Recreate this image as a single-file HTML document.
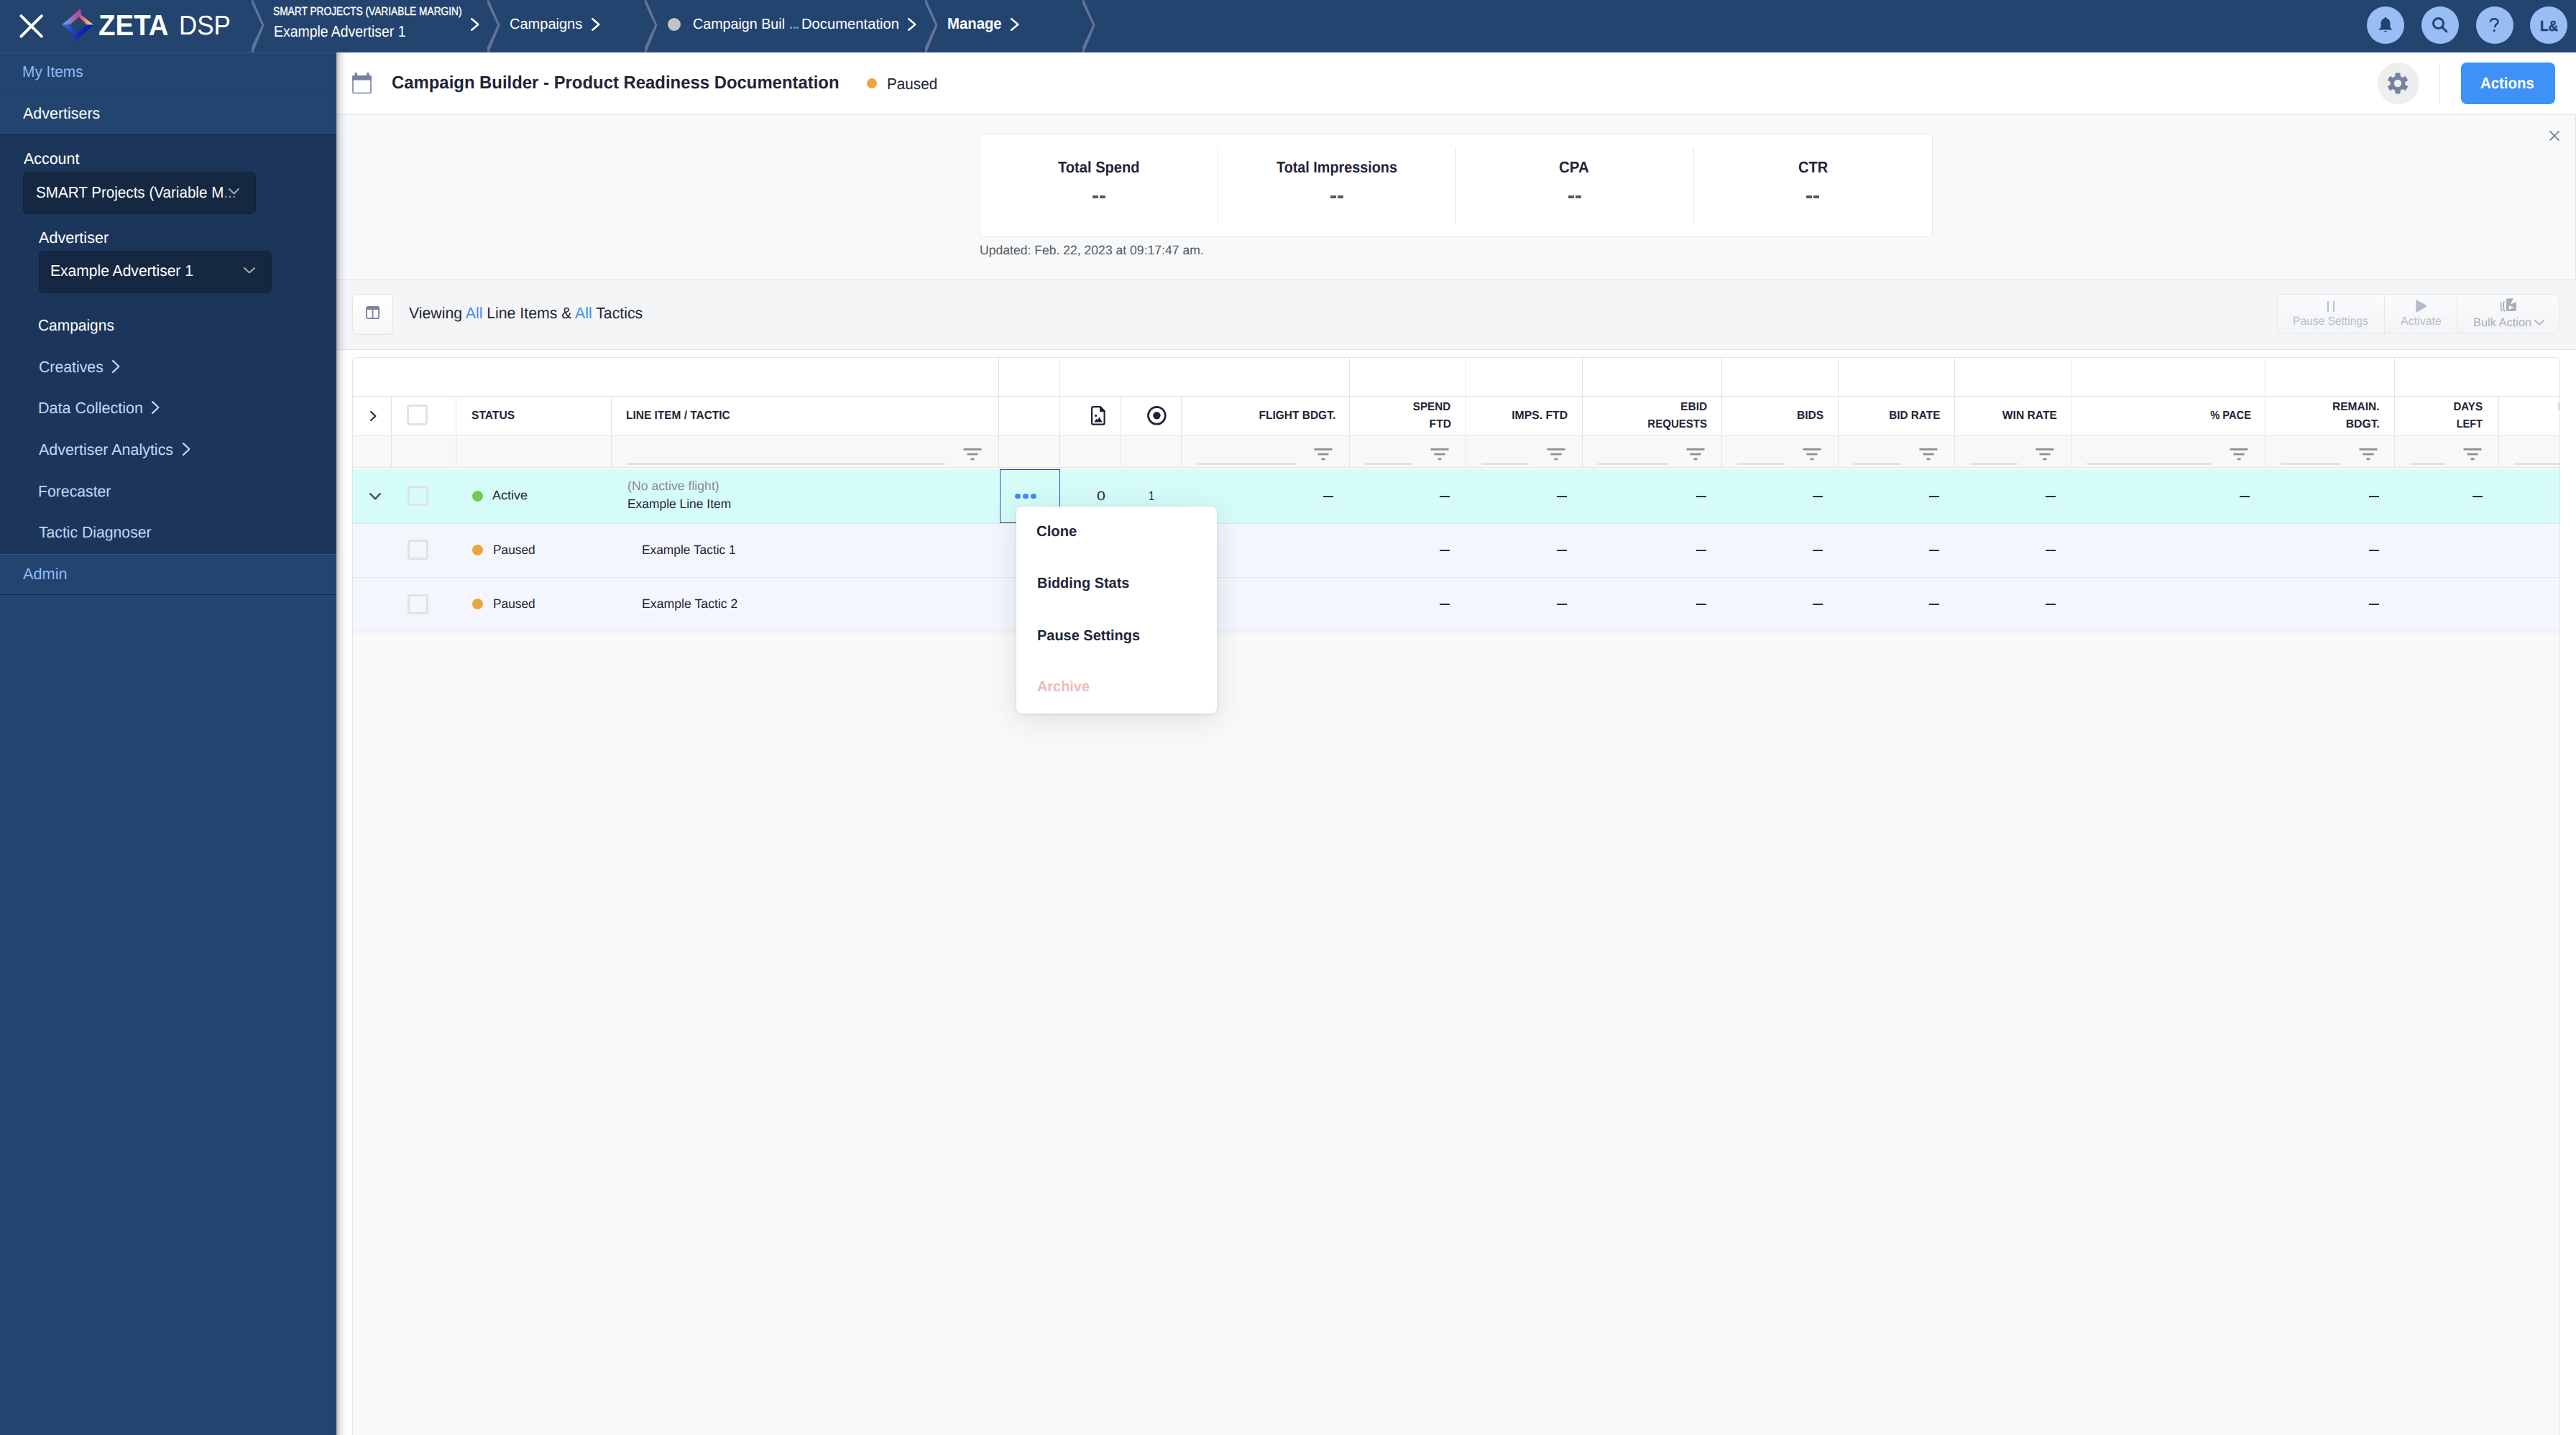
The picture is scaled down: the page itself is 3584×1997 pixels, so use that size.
<!DOCTYPE html>
<html><head><meta charset="utf-8"><title>Zeta DSP</title>
<style>
html,body{margin:0;padding:0;width:3584px;height:1997px;overflow:hidden;background:#fff;font-family:"Liberation Sans", sans-serif;}
body{position:relative;}
.b{position:absolute;}
.t{position:absolute;white-space:nowrap;line-height:1;text-rendering:geometricPrecision;}
</style></head><body>
<div class="b" style="left:0px;top:0px;width:3584px;height:73px;background:#23446F;"></div>
<div class="b" style="left:0px;top:73px;width:468px;height:1px;background:#245B7A;"></div>
<svg class="b" style="left:26px;top:19px" width="35" height="35" viewBox="0 0 35 35"><path d="M3.4 3.1L31.9 31.7M31.9 3.1L3.4 31.7" stroke="#fff" stroke-width="3.9" stroke-linecap="round"/></svg>
<svg class="b" style="left:80px;top:5px" width="56" height="60" viewBox="80 5 56 60">
<defs><linearGradient id="lg1" gradientUnits="userSpaceOnUse" x1="86" y1="34" x2="130" y2="34"><stop offset="0" stop-color="#45B4F2"/><stop offset="0.55" stop-color="#C7428A"/><stop offset="0.75" stop-color="#E98A78"/><stop offset="1" stop-color="#FCF77A"/></linearGradient>
<linearGradient id="lg2" gradientUnits="userSpaceOnUse" x1="86" y1="34" x2="130" y2="50"><stop offset="0" stop-color="#3A6BDC"/><stop offset="0.6" stop-color="#1028B8"/><stop offset="1" stop-color="#0812A0"/></linearGradient></defs>
<path d="M86 34.6 L111.6 12.6 L113.3 21 L130 34.6 L121 34.6 L110 23.6 L97 34.6 Z" fill="url(#lg1)"/>
<path d="M86 34.6 L97 34.6 L106 46.5 L121 34.6 L130 34.6 L104.3 58 L102.5 48 Z" fill="url(#lg2)"/>
</svg>
<svg class="b" style="left:350px;top:0px" width="20" height="73" viewBox="0 0 20 73"><path d="M0 0 L2.2 0 L17.6 35.1 L2.2 73 L0 73 L0 65.6 L14.3 35.1 L0 4.6 Z" fill="#627395"/></svg>
<svg class="b" style="left:678px;top:0px" width="20" height="73" viewBox="0 0 20 73"><path d="M0 0 L2.2 0 L17.6 35.1 L2.2 73 L0 73 L0 65.6 L14.3 35.1 L0 4.6 Z" fill="#627395"/></svg>
<svg class="b" style="left:897px;top:0px" width="20" height="73" viewBox="0 0 20 73"><path d="M0 0 L2.2 0 L17.6 35.1 L2.2 73 L0 73 L0 65.6 L14.3 35.1 L0 4.6 Z" fill="#627395"/></svg>
<svg class="b" style="left:1287px;top:0px" width="20" height="73" viewBox="0 0 20 73"><path d="M0 0 L2.2 0 L17.6 35.1 L2.2 73 L0 73 L0 65.6 L14.3 35.1 L0 4.6 Z" fill="#627395"/></svg>
<svg class="b" style="left:1506px;top:0px" width="20" height="73" viewBox="0 0 20 73"><path d="M0 0 L2.2 0 L17.6 35.1 L2.2 73 L0 73 L0 65.6 L14.3 35.1 L0 4.6 Z" fill="#627395"/></svg>
<svg class="b" style="left:655px;top:25px" width="12" height="18" viewBox="0 0 12 18"><path d="M1.25 1.25 L10.25 9.0 L1.25 16.75" stroke="#fff" stroke-width="2.5" fill="none" stroke-linecap="round" stroke-linejoin="round"/></svg>
<svg class="b" style="left:823px;top:25px" width="12" height="18" viewBox="0 0 12 18"><path d="M1.25 1.25 L10.25 9.0 L1.25 16.75" stroke="#fff" stroke-width="2.5" fill="none" stroke-linecap="round" stroke-linejoin="round"/></svg>
<div class="b" style="left:929px;top:25px;width:18px;height:18px;background:#C0C3C8;border-radius:50%;"></div>
<div class="b" style="left:1099px;top:37px;width:3px;height:3px;background:#6FA8F5;border-radius:50%;"></div>
<div class="b" style="left:1103.6px;top:37px;width:3px;height:3px;background:#6FA8F5;border-radius:50%;"></div>
<div class="b" style="left:1108.2px;top:37px;width:3px;height:3px;background:#6FA8F5;border-radius:50%;"></div>
<svg class="b" style="left:1263px;top:25px" width="12" height="18" viewBox="0 0 12 18"><path d="M1.25 1.25 L10.25 9.0 L1.25 16.75" stroke="#fff" stroke-width="2.5" fill="none" stroke-linecap="round" stroke-linejoin="round"/></svg>
<svg class="b" style="left:1406px;top:25px" width="12" height="18" viewBox="0 0 12 18"><path d="M1.25 1.25 L10.25 9.0 L1.25 16.75" stroke="#fff" stroke-width="2.5" fill="none" stroke-linecap="round" stroke-linejoin="round"/></svg>
<div class="b" style="left:3293px;top:9px;width:52px;height:52px;background:#99BEF6;border-radius:50%;"></div>
<div class="b" style="left:3369px;top:9px;width:52px;height:52px;background:#99BEF6;border-radius:50%;"></div>
<div class="b" style="left:3445px;top:9px;width:52px;height:52px;background:#99BEF6;border-radius:50%;"></div>
<div class="b" style="left:3520px;top:9px;width:52px;height:52px;background:#99BEF6;border-radius:50%;"></div>
<svg class="b" style="left:3306px;top:22px" width="26" height="26" viewBox="0 0 26 26"><path d="M13 2 C14 2 14.5 2.6 14.5 3.4 C18 4.3 19.5 7.5 19.5 11 L19.5 15 C19.5 16.5 20.5 17.8 22.5 18.8 L22.5 19.6 L3.5 19.6 L3.5 18.8 C5.5 17.8 6.5 16.5 6.5 15 L6.5 11 C6.5 7.5 8 4.3 11.5 3.4 C11.5 2.6 12 2 13 2 Z M10.8 21 L15.2 21 L13 23.2 Z" fill="#22426E"/></svg>
<svg class="b" style="left:3382px;top:22px" width="26" height="26" viewBox="0 0 26 26"><circle cx="10.5" cy="10.5" r="7" stroke="#22426E" stroke-width="3" fill="none"/><path d="M15.5 15.5 L22 22" stroke="#22426E" stroke-width="3" stroke-linecap="round"/></svg>
<svg class="b" style="left:3463px;top:25px" width="16" height="21" viewBox="0 0 16 21"><path d="M1.9 5.6 C2.1 2.7 4.5 1.3 7.3 1.3 C10.4 1.3 12.5 3.1 12.5 5.4 C12.5 7.6 10.8 8.5 9.6 9.5 C8.7 10.2 8.3 11.1 8.3 13.3" stroke="#22426E" stroke-width="2.6" fill="none"/><path d="M7.1 15.8 L9.1 17.7 L7.1 19.6 L5.1 17.7 Z" fill="#22426E"/></svg>
<div class="b" style="left:0px;top:74px;width:468px;height:1923px;background:#22456F;"></div>
<div class="b" style="left:0px;top:74px;width:468px;height:55px;background:#23446F;"></div>
<div class="b" style="left:0px;top:129px;width:468px;height:1px;background:#1B2B42;"></div>
<div class="b" style="left:0px;top:130px;width:468px;height:1px;background:#245B7A;"></div>
<div class="b" style="left:0px;top:131px;width:468px;height:56px;background:#23446F;"></div>
<div class="b" style="left:0px;top:187px;width:468px;height:584px;background:#1C365B;"></div>
<div class="b" style="left:0px;top:187px;width:468px;height:1px;background:#15263D;"></div>
<div class="b" style="left:0px;top:771px;width:468px;height:1px;background:#245B7A;"></div>
<div class="b" style="left:0px;top:772px;width:468px;height:55px;background:#23446F;"></div>
<div class="b" style="left:0px;top:827px;width:468px;height:1px;background:#1B2B42;"></div>
<div class="b" style="left:32px;top:239px;width:324px;height:59px;background:#152842;border-radius:7px;box-sizing:border-box;border:1px solid #10213A;"></div>
<svg class="b" style="left:317.5px;top:262px" width="15" height="9" viewBox="0 0 15 9"><path d="M1.0 1.0 L7.5 7.5 L14.0 1.0" stroke="#A9A7A8" stroke-width="2" fill="none" stroke-linecap="round" stroke-linejoin="round"/></svg>
<div class="b" style="left:54px;top:349px;width:324px;height:59px;background:#152842;border-radius:7px;box-sizing:border-box;border:1px solid #10213A;"></div>
<svg class="b" style="left:339px;top:372px" width="16" height="9" viewBox="0 0 16 9"><path d="M1.0 1.0 L8.0 7.5 L15.0 1.0" stroke="#A9A7A8" stroke-width="2" fill="none" stroke-linecap="round" stroke-linejoin="round"/></svg>
<svg class="b" style="left:156px;top:501px" width="11" height="18" viewBox="0 0 11 18"><path d="M1.1 1.1 L9.4 9.0 L1.1 16.9" stroke="#C2D7F9" stroke-width="2.2" fill="none" stroke-linecap="round" stroke-linejoin="round"/></svg>
<svg class="b" style="left:211px;top:558px" width="11" height="18" viewBox="0 0 11 18"><path d="M1.1 1.1 L9.4 9.0 L1.1 16.9" stroke="#C2D7F9" stroke-width="2.2" fill="none" stroke-linecap="round" stroke-linejoin="round"/></svg>
<svg class="b" style="left:254px;top:616px" width="11" height="18" viewBox="0 0 11 18"><path d="M1.1 1.1 L9.4 9.0 L1.1 16.9" stroke="#C2D7F9" stroke-width="2.2" fill="none" stroke-linecap="round" stroke-linejoin="round"/></svg>
<div class="b" style="left:468px;top:73px;width:3116px;height:86px;background:#fff;"></div>
<div class="b" style="left:468px;top:159px;width:3116px;height:1px;background:#E4E7EB;"></div>
<div class="b" style="left:468px;top:160px;width:3116px;height:228px;background:#F8F9FA;"></div>
<div class="b" style="left:468px;top:388px;width:3116px;height:1px;background:#E2E5EA;"></div>
<div class="b" style="left:3583px;top:160px;width:1px;height:228px;background:#E2E5EA;"></div>
<div class="b" style="left:468px;top:389px;width:3116px;height:97px;background:#F4F5F7;"></div>
<div class="b" style="left:468px;top:486px;width:3116px;height:1px;background:#E2E5EA;"></div>
<div class="b" style="left:468px;top:487px;width:3116px;height:1510px;background:#fff;"></div>
<svg class="b" style="left:490px;top:101px" width="28" height="30" viewBox="0 0 28 30">
<rect x="1.0" y="4.9" width="25.0" height="23.6" rx="1.6" fill="none" stroke="#7482A0" stroke-width="1.6"/>
<rect x="0.2" y="4.1" width="26.6" height="6.5" fill="#7482A0"/>
<rect x="3.6" y="0.2" width="3.3" height="4.5" fill="#7482A0"/><rect x="20.1" y="0.2" width="3.4" height="4.5" fill="#7482A0"/>
</svg>
<div class="b" style="left:1206px;top:109px;width:14px;height:14px;background:#EBA53E;border-radius:50%;"></div>
<div class="b" style="left:3308px;top:87px;width:58px;height:58px;background:#EEEEEE;border-radius:50%;"></div>
<svg class="b" style="left:3320px;top:100px" width="32" height="32" viewBox="0 0 32 32">
<g fill="#7683A0" transform="translate(16 16)">
<rect x="-3.6" y="-14.5" width="7.2" height="29" rx="1"/>
<rect x="-3.6" y="-14.5" width="7.2" height="29" rx="1" transform="rotate(60)"/>
<rect x="-3.6" y="-14.5" width="7.2" height="29" rx="1" transform="rotate(120)"/>
<circle r="10.5"/>
</g><circle cx="16" cy="16" r="5.2" fill="#EEEEEE"/></svg>
<div class="b" style="left:3394px;top:87px;width:1px;height:58px;background:#E3E3E3;"></div>
<div class="b" style="left:3424px;top:87px;width:131px;height:58px;background:#3D91F7;border-radius:8px;"></div>
<div class="b" style="left:1363px;top:186px;width:1326px;height:144px;background:#fff;border:1px solid #E6E8EB;box-sizing:border-box;border-radius:3px;"></div>
<div class="b" style="left:1694px;top:205px;width:1px;height:107px;background:#E6E6E6;"></div>
<div class="b" style="left:2025px;top:205px;width:1px;height:107px;background:#E6E6E6;"></div>
<div class="b" style="left:2356px;top:205px;width:1px;height:107px;background:#E6E6E6;"></div>
<div class="b" style="left:1520px;top:272px;width:8px;height:4px;background:#4F5A62;border-radius:1px;"></div>
<div class="b" style="left:1530px;top:272px;width:8px;height:4px;background:#4F5A62;border-radius:1px;"></div>
<div class="b" style="left:1851px;top:272px;width:8px;height:4px;background:#4F5A62;border-radius:1px;"></div>
<div class="b" style="left:1861px;top:272px;width:8px;height:4px;background:#4F5A62;border-radius:1px;"></div>
<div class="b" style="left:2182px;top:272px;width:8px;height:4px;background:#4F5A62;border-radius:1px;"></div>
<div class="b" style="left:2192px;top:272px;width:8px;height:4px;background:#4F5A62;border-radius:1px;"></div>
<div class="b" style="left:2513px;top:272px;width:8px;height:4px;background:#4F5A62;border-radius:1px;"></div>
<div class="b" style="left:2523px;top:272px;width:8px;height:4px;background:#4F5A62;border-radius:1px;"></div>
<svg class="b" style="left:3546px;top:181px" width="16" height="16" viewBox="0 0 16 16"><path d="M1.5 1.5L14.5 14.5M14.5 1.5L1.5 14.5" stroke="#7683A0" stroke-width="1.8"/></svg>
<div class="b" style="left:490px;top:409px;width:57px;height:57px;background:linear-gradient(#fff,#F6F6F6);border:1px solid #E3E3E6;box-sizing:border-box;border-radius:7px;"></div>
<svg class="b" style="left:509px;top:426px" width="19" height="18" viewBox="0 0 19 18">
<rect x="0.9" y="0.9" width="17.2" height="16.2" rx="2.2" fill="none" stroke="#7783A0" stroke-width="1.8"/>
<rect x="0.9" y="0.9" width="17.2" height="4.2" rx="1.5" fill="#7783A0"/><rect x="8.6" y="3" width="1.8" height="14" fill="#7783A0"/></svg>
<div class="b" style="left:3168px;top:409px;width:393px;height:56px;background:linear-gradient(#FAFBFC,#F3F4F6);border:1px solid #E6E8EC;box-sizing:border-box;border-radius:8px;"></div>
<div class="b" style="left:3317px;top:410px;width:1px;height:54px;background:#E6E8EC;"></div>
<div class="b" style="left:3418px;top:410px;width:1px;height:54px;background:#E6E8EC;"></div>
<div class="b" style="left:3238px;top:419px;width:2px;height:15px;background:#B7BECE;"></div>
<div class="b" style="left:3246px;top:419px;width:2px;height:15px;background:#B7BECE;"></div>
<svg class="b" style="left:3361px;top:417px" width="16" height="18" viewBox="0 0 16 18"><path d="M0.3 2 Q0.3 -0.2 2.4 0.9 L14.2 7.6 Q15.6 8.9 14.2 10.2 L2.4 16.9 Q0.3 18.1 0.3 15.8 Z" fill="#B4BBCB"/></svg>
<svg class="b" style="left:3478px;top:414px" width="24" height="20" viewBox="0 0 24 20">
<path d="M2.4 6.5 Q1.6 8 1.6 12 Q1.6 17.5 3.4 19.2" stroke="#A9AEB8" stroke-width="1.6" fill="none"/>
<path d="M6 5 Q5.1 7 5.1 12 Q5.1 17.6 7 19.2" stroke="#A9AEB8" stroke-width="1.8" fill="none"/>
<path d="M10.6 1.3 L18.9 1.3 L14.9 9.4 L23 6 L23 17.8 Q23 19 21.8 19 L10.2 19 Q9 19 9 17.8 L9 2.9 Q9 1.3 10.6 1.3 Z" fill="#A9AEB8"/>
<path d="M12.7 11.8 Q12.7 11 13.4 11.3 L19.6 14 L13.4 16.6 Q12.7 16.9 12.7 16.1 Z" fill="#F5F6F8"/></svg>
<svg class="b" style="left:3526px;top:445px" width="14" height="8" viewBox="0 0 14 8"><path d="M0.9 0.9 L7.0 6.6 L13.1 0.9" stroke="#A9AEB8" stroke-width="1.8" fill="none" stroke-linecap="round" stroke-linejoin="round"/></svg>
<div class="b" style="left:490px;top:497px;width:3072px;height:1510px;background:#F9F9F9;border:1px solid #E4E4E4;box-sizing:border-box;border-radius:5px;"></div>
<div class="b" style="left:491px;top:498px;width:3070px;height:53px;background:#fff;border-radius:4px 4px 0 0;"></div>
<div class="b" style="left:491px;top:551px;width:3070px;height:1px;background:#E4E4E4;"></div>
<div class="b" style="left:491px;top:552px;width:3070px;height:53px;background:#fff;"></div>
<div class="b" style="left:491px;top:605px;width:3070px;height:1px;background:#E4E4E4;"></div>
<div class="b" style="left:491px;top:606px;width:3070px;height:44px;background:#F8F8F8;"></div>
<div class="b" style="left:491px;top:650px;width:3070px;height:1px;background:#E4E4E4;"></div>
<div class="b" style="left:491px;top:651px;width:3070px;height:2px;background:#FAFAFA;"></div>
<div class="b" style="left:491px;top:653px;width:3070px;height:75px;background:#D6FCFA;"></div>
<div class="b" style="left:491px;top:728px;width:3070px;height:1px;background:#E3E6EA;"></div>
<div class="b" style="left:491px;top:729px;width:3070px;height:74px;background:#F3F6FD;"></div>
<div class="b" style="left:491px;top:803px;width:3070px;height:1px;background:#E3E6EA;"></div>
<div class="b" style="left:491px;top:804px;width:3070px;height:75px;background:#F3F6FD;"></div>
<div class="b" style="left:491px;top:879px;width:3070px;height:1px;background:#E3E3E3;"></div>
<div class="b" style="left:1389px;top:498px;width:1px;height:53px;background:#E4E4E4;"></div>
<div class="b" style="left:1474px;top:498px;width:1px;height:53px;background:#E4E4E4;"></div>
<div class="b" style="left:1877px;top:498px;width:1px;height:53px;background:#E4E4E4;"></div>
<div class="b" style="left:2039px;top:498px;width:1px;height:53px;background:#E4E4E4;"></div>
<div class="b" style="left:2201px;top:498px;width:1px;height:53px;background:#E4E4E4;"></div>
<div class="b" style="left:2395px;top:498px;width:1px;height:53px;background:#E4E4E4;"></div>
<div class="b" style="left:2557px;top:498px;width:1px;height:53px;background:#E4E4E4;"></div>
<div class="b" style="left:2719px;top:498px;width:1px;height:53px;background:#E4E4E4;"></div>
<div class="b" style="left:2881px;top:498px;width:1px;height:53px;background:#E4E4E4;"></div>
<div class="b" style="left:3151px;top:498px;width:1px;height:53px;background:#E4E4E4;"></div>
<div class="b" style="left:3331px;top:498px;width:1px;height:53px;background:#E4E4E4;"></div>
<div class="b" style="left:544px;top:552px;width:1px;height:98px;background:#E4E4E4;"></div>
<div class="b" style="left:634px;top:552px;width:1px;height:98px;background:#E4E4E4;"></div>
<div class="b" style="left:850px;top:552px;width:1px;height:98px;background:#E4E4E4;"></div>
<div class="b" style="left:1389px;top:552px;width:1px;height:98px;background:#E4E4E4;"></div>
<div class="b" style="left:1474px;top:552px;width:1px;height:98px;background:#E4E4E4;"></div>
<div class="b" style="left:1559px;top:552px;width:1px;height:98px;background:#E4E4E4;"></div>
<div class="b" style="left:1643px;top:552px;width:1px;height:98px;background:#E4E4E4;"></div>
<div class="b" style="left:1877px;top:552px;width:1px;height:98px;background:#E4E4E4;"></div>
<div class="b" style="left:2039px;top:552px;width:1px;height:98px;background:#E4E4E4;"></div>
<div class="b" style="left:2201px;top:552px;width:1px;height:98px;background:#E4E4E4;"></div>
<div class="b" style="left:2395px;top:552px;width:1px;height:98px;background:#E4E4E4;"></div>
<div class="b" style="left:2557px;top:552px;width:1px;height:98px;background:#E4E4E4;"></div>
<div class="b" style="left:2719px;top:552px;width:1px;height:98px;background:#E4E4E4;"></div>
<div class="b" style="left:2881px;top:552px;width:1px;height:98px;background:#E4E4E4;"></div>
<div class="b" style="left:3151px;top:552px;width:1px;height:98px;background:#E4E4E4;"></div>
<div class="b" style="left:3331px;top:552px;width:1px;height:98px;background:#E4E4E4;"></div>
<div class="b" style="left:3476px;top:552px;width:1px;height:98px;background:#E4E4E4;"></div>
<svg class="b" style="left:515px;top:572px" width="9" height="14" viewBox="0 0 9 14"><path d="M1.0 1.0 L7.5 7.0 L1.0 13.0" stroke="#1F2538" stroke-width="2" fill="none" stroke-linecap="round" stroke-linejoin="round"/></svg>
<div class="b" style="left:566px;top:563px;width:29px;height:29px;border:3px solid #E2E2E2;box-sizing:border-box;border-radius:4px;background:#fff;"></div>
<svg class="b" style="left:1518px;top:565px" width="21" height="27" viewBox="0 0 21 27">
<path d="M3 1.1 L12.8 1.1 L18.6 7.2 L18.6 23.8 Q18.6 25.7 16.7 25.7 L3 25.7 Q1.1 25.7 1.1 23.8 L1.1 3 Q1.1 1.1 3 1.1 Z" fill="none" stroke="#1F2538" stroke-width="2.2" stroke-linejoin="round"/>
<path d="M12 0.2 L13.2 0.2 L19.6 6.8 L19.6 8.2 L13.6 8.2 Q12 8.2 12 6.6 Z" fill="#1F2538"/>
<circle cx="6.6" cy="13.4" r="1.6" fill="#1F2538"/>
<path d="M4.2 22.6 L7.6 17.6 L9.2 19.4 L11.4 15.2 L15.8 22.6 Z" fill="#1F2538"/></svg>
<svg class="b" style="left:1596px;top:565px" width="28" height="28" viewBox="0 0 28 28"><circle cx="13.4" cy="13.3" r="11.9" fill="none" stroke="#1F2538" stroke-width="2.7"/><circle cx="13.4" cy="13.3" r="5.2" fill="#1F2538"/></svg>
<div class="b" style="left:872px;top:644px;width:443px;height:3px;background:#E2E2E2;border-radius:1.5px;"></div>
<svg class="b" style="left:1340px;top:624px" width="26" height="17" viewBox="0 0 26 17"><rect x="0.5" y="0" width="25" height="2.6" fill="#8A8C92"/><rect x="5.5" y="6.8" width="15" height="2.6" fill="#8A8C92"/><rect x="10.5" y="13.6" width="5" height="2.6" fill="#8A8C92"/></svg>
<div class="b" style="left:1666px;top:644px;width:137px;height:3px;background:#E2E2E2;border-radius:1.5px;"></div>
<svg class="b" style="left:1828px;top:624px" width="26" height="17" viewBox="0 0 26 17"><rect x="0.5" y="0" width="25" height="2.6" fill="#8A8C92"/><rect x="5.5" y="6.8" width="15" height="2.6" fill="#8A8C92"/><rect x="10.5" y="13.6" width="5" height="2.6" fill="#8A8C92"/></svg>
<div class="b" style="left:1899px;top:644px;width:66px;height:3px;background:#E2E2E2;border-radius:1.5px;"></div>
<svg class="b" style="left:1990px;top:624px" width="26" height="17" viewBox="0 0 26 17"><rect x="0.5" y="0" width="25" height="2.6" fill="#8A8C92"/><rect x="5.5" y="6.8" width="15" height="2.6" fill="#8A8C92"/><rect x="10.5" y="13.6" width="5" height="2.6" fill="#8A8C92"/></svg>
<div class="b" style="left:2061px;top:644px;width:66px;height:3px;background:#E2E2E2;border-radius:1.5px;"></div>
<svg class="b" style="left:2152px;top:624px" width="26" height="17" viewBox="0 0 26 17"><rect x="0.5" y="0" width="25" height="2.6" fill="#8A8C92"/><rect x="5.5" y="6.8" width="15" height="2.6" fill="#8A8C92"/><rect x="10.5" y="13.6" width="5" height="2.6" fill="#8A8C92"/></svg>
<div class="b" style="left:2223px;top:644px;width:98px;height:3px;background:#E2E2E2;border-radius:1.5px;"></div>
<svg class="b" style="left:2346px;top:624px" width="26" height="17" viewBox="0 0 26 17"><rect x="0.5" y="0" width="25" height="2.6" fill="#8A8C92"/><rect x="5.5" y="6.8" width="15" height="2.6" fill="#8A8C92"/><rect x="10.5" y="13.6" width="5" height="2.6" fill="#8A8C92"/></svg>
<div class="b" style="left:2417px;top:644px;width:66px;height:3px;background:#E2E2E2;border-radius:1.5px;"></div>
<svg class="b" style="left:2508px;top:624px" width="26" height="17" viewBox="0 0 26 17"><rect x="0.5" y="0" width="25" height="2.6" fill="#8A8C92"/><rect x="5.5" y="6.8" width="15" height="2.6" fill="#8A8C92"/><rect x="10.5" y="13.6" width="5" height="2.6" fill="#8A8C92"/></svg>
<div class="b" style="left:2579px;top:644px;width:66px;height:3px;background:#E2E2E2;border-radius:1.5px;"></div>
<svg class="b" style="left:2670px;top:624px" width="26" height="17" viewBox="0 0 26 17"><rect x="0.5" y="0" width="25" height="2.6" fill="#8A8C92"/><rect x="5.5" y="6.8" width="15" height="2.6" fill="#8A8C92"/><rect x="10.5" y="13.6" width="5" height="2.6" fill="#8A8C92"/></svg>
<div class="b" style="left:2741px;top:644px;width:66px;height:3px;background:#E2E2E2;border-radius:1.5px;"></div>
<svg class="b" style="left:2832px;top:624px" width="26" height="17" viewBox="0 0 26 17"><rect x="0.5" y="0" width="25" height="2.6" fill="#8A8C92"/><rect x="5.5" y="6.8" width="15" height="2.6" fill="#8A8C92"/><rect x="10.5" y="13.6" width="5" height="2.6" fill="#8A8C92"/></svg>
<div class="b" style="left:2903px;top:644px;width:174px;height:3px;background:#E2E2E2;border-radius:1.5px;"></div>
<svg class="b" style="left:3102px;top:624px" width="26" height="17" viewBox="0 0 26 17"><rect x="0.5" y="0" width="25" height="2.6" fill="#8A8C92"/><rect x="5.5" y="6.8" width="15" height="2.6" fill="#8A8C92"/><rect x="10.5" y="13.6" width="5" height="2.6" fill="#8A8C92"/></svg>
<div class="b" style="left:3173px;top:644px;width:84px;height:3px;background:#E2E2E2;border-radius:1.5px;"></div>
<svg class="b" style="left:3282px;top:624px" width="26" height="17" viewBox="0 0 26 17"><rect x="0.5" y="0" width="25" height="2.6" fill="#8A8C92"/><rect x="5.5" y="6.8" width="15" height="2.6" fill="#8A8C92"/><rect x="10.5" y="13.6" width="5" height="2.6" fill="#8A8C92"/></svg>
<div class="b" style="left:3353px;top:644px;width:49px;height:3px;background:#E2E2E2;border-radius:1.5px;"></div>
<svg class="b" style="left:3427px;top:624px" width="26" height="17" viewBox="0 0 26 17"><rect x="0.5" y="0" width="25" height="2.6" fill="#8A8C92"/><rect x="5.5" y="6.8" width="15" height="2.6" fill="#8A8C92"/><rect x="10.5" y="13.6" width="5" height="2.6" fill="#8A8C92"/></svg>
<div class="b" style="left:3498px;top:644px;width:63px;height:3px;background:#E2E2E2;"></div>
<div class="b" style="left:3559px;top:560px;width:2px;height:11px;background:#D8D8DC;"></div>
<svg class="b" style="left:514px;top:686px" width="16" height="10" viewBox="0 0 16 10"><path d="M1.2 1.2 L8.0 8.3 L14.8 1.2" stroke="#4A505C" stroke-width="2.4" fill="none" stroke-linecap="round" stroke-linejoin="round"/></svg>
<div class="b" style="left:567px;top:676px;width:29px;height:28px;border:3px solid #E2E2E2;box-sizing:border-box;border-radius:4px;"></div>
<div class="b" style="left:567px;top:751px;width:29px;height:28px;border:3px solid #E2E2E2;box-sizing:border-box;border-radius:4px;"></div>
<div class="b" style="left:567px;top:827px;width:29px;height:28px;border:3px solid #E2E2E2;box-sizing:border-box;border-radius:4px;"></div>
<div class="b" style="left:657px;top:683px;width:15px;height:15px;background:#74C952;border-radius:50%;"></div>
<div class="b" style="left:657px;top:758px;width:15px;height:15px;background:#EBA53E;border-radius:50%;"></div>
<div class="b" style="left:657px;top:833px;width:15px;height:15px;background:#EBA53E;border-radius:50%;"></div>
<div class="b" style="left:1841px;top:690px;width:14px;height:2px;background:#2A2E38;"></div>
<div class="b" style="left:2003px;top:690px;width:14px;height:2px;background:#2A2E38;"></div>
<div class="b" style="left:2166px;top:690px;width:14px;height:2px;background:#2A2E38;"></div>
<div class="b" style="left:2360px;top:690px;width:14px;height:2px;background:#2A2E38;"></div>
<div class="b" style="left:2522px;top:690px;width:14px;height:2px;background:#2A2E38;"></div>
<div class="b" style="left:2684px;top:690px;width:14px;height:2px;background:#2A2E38;"></div>
<div class="b" style="left:2846px;top:690px;width:14px;height:2px;background:#2A2E38;"></div>
<div class="b" style="left:3116px;top:690px;width:14px;height:2px;background:#2A2E38;"></div>
<div class="b" style="left:3296px;top:690px;width:14px;height:2px;background:#2A2E38;"></div>
<div class="b" style="left:3440px;top:690px;width:14px;height:2px;background:#2A2E38;"></div>
<div class="b" style="left:2003px;top:765px;width:14px;height:2px;background:#2A2E38;"></div>
<div class="b" style="left:2166px;top:765px;width:14px;height:2px;background:#2A2E38;"></div>
<div class="b" style="left:2360px;top:765px;width:14px;height:2px;background:#2A2E38;"></div>
<div class="b" style="left:2522px;top:765px;width:14px;height:2px;background:#2A2E38;"></div>
<div class="b" style="left:2684px;top:765px;width:14px;height:2px;background:#2A2E38;"></div>
<div class="b" style="left:2846px;top:765px;width:14px;height:2px;background:#2A2E38;"></div>
<div class="b" style="left:3296px;top:765px;width:14px;height:2px;background:#2A2E38;"></div>
<div class="b" style="left:2003px;top:840px;width:14px;height:2px;background:#2A2E38;"></div>
<div class="b" style="left:2166px;top:840px;width:14px;height:2px;background:#2A2E38;"></div>
<div class="b" style="left:2360px;top:840px;width:14px;height:2px;background:#2A2E38;"></div>
<div class="b" style="left:2522px;top:840px;width:14px;height:2px;background:#2A2E38;"></div>
<div class="b" style="left:2684px;top:840px;width:14px;height:2px;background:#2A2E38;"></div>
<div class="b" style="left:2846px;top:840px;width:14px;height:2px;background:#2A2E38;"></div>
<div class="b" style="left:3296px;top:840px;width:14px;height:2px;background:#2A2E38;"></div>
<div class="b" style="left:1391px;top:653px;width:84px;height:75px;border:1.5px solid #3A46A8;box-sizing:border-box;"></div>
<div class="b" style="left:1412.4px;top:686.6px;width:7.2px;height:7.2px;background:#3B8EF2;border-radius:50%;"></div>
<div class="b" style="left:1423.4px;top:686.6px;width:7.2px;height:7.2px;background:#3B8EF2;border-radius:50%;"></div>
<div class="b" style="left:1434.4px;top:686.6px;width:7.2px;height:7.2px;background:#3B8EF2;border-radius:50%;"></div>
<div class="b" style="left:1414px;top:705px;width:279px;height:288px;background:#fff;border-radius:8px;box-shadow:0 1px 4px rgba(0,0,0,0.10), 0 8px 40px rgba(30,50,50,0.13);"></div>
<div class="b" style="left:468px;top:73px;width:15px;height:1924px;background:linear-gradient(to right, rgba(0,0,0,0.30), rgba(0,0,0,0.12) 30%, rgba(0,0,0,0.03) 70%, rgba(0,0,0,0));"></div>
<span class="t" id="t0" style="left:137.00px;transform-origin:0 50%;top:15px;font-size:40.75px;color:#fff;font-weight:700;transform:scaleX(0.9446);">ZETA</span>
<span class="t" id="t1" style="left:249.40px;transform-origin:0 50%;top:17px;font-size:37.75px;color:#fff;font-weight:400;transform:scaleX(0.9248);">DSP</span>
<span class="t" id="t2" style="left:380.40px;transform-origin:0 50%;top:8px;font-size:16.25px;color:#fff;font-weight:400;transform:scaleX(0.8453);-webkit-text-stroke:0.35px #fff;">SMART PROJECTS (VARIABLE MARGIN)</span>
<span class="t" id="t3" style="left:381.00px;transform-origin:0 50%;top:33px;font-size:21.75px;color:#fff;font-weight:400;transform:scaleX(0.8926);">Example Advertiser 1</span>
<span class="t" id="t4" style="left:709.00px;transform-origin:0 50%;top:24px;font-size:20.25px;color:#fff;font-weight:400;transform:scaleX(0.9882);">Campaigns</span>
<span class="t" id="t5" style="left:964.40px;transform-origin:0 50%;top:24px;font-size:20.25px;color:#fff;font-weight:400;transform:scaleX(0.9722);">Campaign Buil</span>
<span class="t" id="t6" style="left:1114.80px;transform-origin:0 50%;top:24px;font-size:20.25px;color:#fff;font-weight:400;transform:scaleX(0.9986);">Documentation</span>
<span class="t" id="t7" style="left:1317.80px;transform-origin:0 50%;top:22px;font-size:21.75px;color:#fff;font-weight:700;transform:scaleX(0.9343);">Manage</span>
<span class="t" id="t8" style="left:3533.80px;transform-origin:0 50%;top:27px;font-size:20.25px;color:#22426E;font-weight:700;transform:scaleX(0.9252);-webkit-text-stroke:0.5px #22426E;">L&amp;</span>
<span class="t" id="t9" style="left:31.40px;transform-origin:0 50%;top:89px;font-size:21.75px;color:#8DBAF8;font-weight:400;transform:scaleX(0.9594);">My Items</span>
<span class="t" id="t10" style="left:32.20px;transform-origin:0 50%;top:147px;font-size:21.75px;color:#fff;font-weight:400;transform:scaleX(0.9862);">Advertisers</span>
<span class="t" id="t11" style="left:33.00px;transform-origin:0 50%;top:210px;font-size:21.75px;color:#fff;font-weight:400;transform:scaleX(0.9849);">Account</span>
<span class="t" id="t12" style="left:50.20px;transform-origin:0 50%;top:257px;font-size:21.75px;color:#fff;font-weight:400;transform:scaleX(0.9483);">SMART Projects (Variable M<span style="color:#A9A7A8">...</span></span>
<span class="t" id="t13" style="left:54.00px;transform-origin:0 50%;top:320px;font-size:21.75px;color:#fff;font-weight:400;transform:scaleX(0.9919);">Advertiser</span>
<span class="t" id="t14" style="left:70.40px;transform-origin:0 50%;top:366px;font-size:21.75px;color:#fff;font-weight:400;transform:scaleX(0.9680);">Example Advertiser 1</span>
<span class="t" id="t15" style="left:53.40px;transform-origin:0 50%;top:442px;font-size:21.75px;color:#fff;font-weight:400;transform:scaleX(0.9621);">Campaigns</span>
<span class="t" id="t16" style="left:53.80px;transform-origin:0 50%;top:500px;font-size:21.75px;color:#C2D7F9;font-weight:400;transform:scaleX(0.9778);">Creatives</span>
<span class="t" id="t17" style="left:52.80px;transform-origin:0 50%;top:557px;font-size:21.75px;color:#C2D7F9;font-weight:400;transform:scaleX(0.9904);">Data Collection</span>
<span class="t" id="t18" style="left:54.00px;transform-origin:0 50%;top:615px;font-size:21.75px;color:#C2D7F9;font-weight:400;transform:scaleX(0.9857);">Advertiser Analytics</span>
<span class="t" id="t19" style="left:53.00px;transform-origin:0 50%;top:673px;font-size:21.75px;color:#C2D7F9;font-weight:400;transform:scaleX(0.9756);">Forecaster</span>
<span class="t" id="t20" style="left:54.40px;transform-origin:0 50%;top:730px;font-size:21.75px;color:#C2D7F9;font-weight:400;transform:scaleX(0.9738);">Tactic Diagnoser</span>
<span class="t" id="t21" style="left:32.00px;transform-origin:0 50%;top:788px;font-size:21.75px;color:#8DBAF8;font-weight:400;">Admin</span>
<span class="t" id="t22" style="left:545.00px;transform-origin:0 50%;top:104px;font-size:24.75px;color:#1F2538;font-weight:700;transform:scaleX(0.9652);">Campaign Builder - Product Readiness Documentation</span>
<span class="t" id="t23" style="left:1233.80px;transform-origin:0 50%;top:106px;font-size:21.75px;color:#1F2538;font-weight:400;transform:scaleX(0.9523);">Paused</span>
<span class="t" id="t24" style="left:3451.40px;transform-origin:0 50%;top:105px;font-size:21.75px;color:#fff;font-weight:700;transform:scaleX(0.9369);">Actions</span>
<span class="t" id="t25" style="left:1472.00px;transform-origin:0 50%;top:222px;font-size:21.75px;color:#1F2538;font-weight:700;transform:scaleX(0.9246);">Total Spend</span>
<span class="t" id="t26" style="left:1776.00px;transform-origin:0 50%;top:222px;font-size:21.75px;color:#1F2538;font-weight:700;transform:scaleX(0.9104);">Total Impressions</span>
<span class="t" id="t27" style="left:2169.00px;transform-origin:0 50%;top:222px;font-size:21.75px;color:#1F2538;font-weight:700;transform:scaleX(0.9423);">CPA</span>
<span class="t" id="t28" style="left:2501.80px;transform-origin:0 50%;top:222px;font-size:21.75px;color:#1F2538;font-weight:700;transform:scaleX(0.9257);">CTR</span>
<span class="t" id="t29" style="left:1363.20px;transform-origin:0 50%;top:340px;font-size:17.75px;color:#505B62;font-weight:400;transform:scaleX(0.9901);">Updated: Feb. 22, 2023 at 09:17:47 am.</span>
<span class="t" id="t30" style="left:569.20px;transform-origin:0 50%;top:425px;font-size:21.75px;color:#1F2538;font-weight:400;transform:scaleX(0.9768);">Viewing <span style="color:#3A8EF3">All</span> Line Items &amp; <span style="color:#3A8EF3">All</span> Tactics</span>
<span class="t" id="t31" style="left:3190.00px;transform-origin:0 50%;top:439px;font-size:16.25px;color:#B7BECE;font-weight:400;transform:scaleX(0.9584);">Pause Settings</span>
<span class="t" id="t32" style="left:3340.00px;transform-origin:0 50%;top:439px;font-size:16.25px;color:#B7BECE;font-weight:400;transform:scaleX(0.9844);">Activate</span>
<span class="t" id="t33" style="left:3440.80px;transform-origin:0 50%;top:441px;font-size:16.25px;color:#A9AEB8;font-weight:400;transform:scaleX(1.0104);">Bulk Action</span>
<span class="t" id="t34" style="left:655.60px;transform-origin:0 50%;top:571px;font-size:16.0px;color:#1F2538;font-weight:700;transform:scaleX(0.9743);">STATUS</span>
<span class="t" id="t35" style="left:871.00px;transform-origin:0 50%;top:571px;font-size:16.0px;color:#1F2538;font-weight:700;transform:scaleX(0.9656);">LINE ITEM / TACTIC</span>
<span class="t" id="t36" style="right:1725.60px;transform-origin:100% 50%;top:571px;font-size:16.0px;color:#1F2538;font-weight:700;transform:scaleX(0.9686);">FLIGHT BDGT.</span>
<span class="t" id="t37" style="right:1565.40px;transform-origin:100% 50%;top:559px;font-size:16.0px;color:#1F2538;font-weight:700;transform:scaleX(0.9501);">SPEND</span>
<span class="t" id="t38" style="right:1565.40px;transform-origin:100% 50%;top:583px;font-size:16.0px;color:#1F2538;font-weight:700;transform:scaleX(0.9805);">FTD</span>
<span class="t" id="t39" style="right:1403.40px;transform-origin:100% 50%;top:571px;font-size:16.0px;color:#1F2538;font-weight:700;transform:scaleX(0.9846);">IMPS. FTD</span>
<span class="t" id="t40" style="right:1209.00px;transform-origin:100% 50%;top:559px;font-size:16.0px;color:#1F2538;font-weight:700;transform:scaleX(0.9708);">EBID</span>
<span class="t" id="t41" style="right:1209.00px;transform-origin:100% 50%;top:583px;font-size:16.0px;color:#1F2538;font-weight:700;transform:scaleX(0.9397);">REQUESTS</span>
<span class="t" id="t42" style="right:1047.00px;transform-origin:100% 50%;top:571px;font-size:16.0px;color:#1F2538;font-weight:700;transform:scaleX(0.9762);">BIDS</span>
<span class="t" id="t43" style="right:885.00px;transform-origin:100% 50%;top:571px;font-size:16.0px;color:#1F2538;font-weight:700;transform:scaleX(0.9573);">BID RATE</span>
<span class="t" id="t44" style="right:722.00px;transform-origin:100% 50%;top:571px;font-size:16.0px;color:#1F2538;font-weight:700;transform:scaleX(0.9768);">WIN RATE</span>
<span class="t" id="t45" style="right:452.40px;transform-origin:100% 50%;top:571px;font-size:16.0px;color:#1F2538;font-weight:700;transform:scaleX(0.9169);">% PACE</span>
<span class="t" id="t46" style="right:273.00px;transform-origin:100% 50%;top:559px;font-size:16.0px;color:#1F2538;font-weight:700;transform:scaleX(0.9697);">REMAIN.</span>
<span class="t" id="t47" style="right:273.00px;transform-origin:100% 50%;top:583px;font-size:16.0px;color:#1F2538;font-weight:700;transform:scaleX(0.9850);">BDGT.</span>
<span class="t" id="t48" style="right:130.00px;transform-origin:100% 50%;top:559px;font-size:16.0px;color:#1F2538;font-weight:700;transform:scaleX(0.9428);">DAYS</span>
<span class="t" id="t49" style="right:130.00px;transform-origin:100% 50%;top:583px;font-size:16.0px;color:#1F2538;font-weight:700;transform:scaleX(0.9080);">LEFT</span>
<span class="t" id="t50" style="left:685.40px;transform-origin:0 50%;top:681px;font-size:17.75px;color:#1F2538;font-weight:400;transform:scaleX(1.0112);">Active</span>
<span class="t" id="t51" style="left:872.60px;transform-origin:0 50%;top:668px;font-size:17.75px;color:#8A8A8A;font-weight:400;transform:scaleX(0.9961);">(No active flight)</span>
<span class="t" id="t52" style="left:873.40px;transform-origin:0 50%;top:693px;font-size:17.75px;color:#1F2538;font-weight:400;transform:scaleX(0.9806);">Example Line Item</span>
<span class="t" id="t53" style="left:685.60px;transform-origin:0 50%;top:757px;font-size:17.75px;color:#1F2538;font-weight:400;transform:scaleX(0.9744);">Paused</span>
<span class="t" id="t54" style="left:685.60px;transform-origin:0 50%;top:832px;font-size:17.75px;color:#1F2538;font-weight:400;transform:scaleX(0.9744);">Paused</span>
<span class="t" id="t55" style="left:893.40px;transform-origin:0 50%;top:757px;font-size:17.75px;color:#1F2538;font-weight:400;transform:scaleX(0.9766);">Example Tactic 1</span>
<span class="t" id="t56" style="left:893.40px;transform-origin:0 50%;top:832px;font-size:17.75px;color:#1F2538;font-weight:400;transform:scaleX(0.9970);">Example Tactic 2</span>
<span class="t" id="t57" style="left:1525.60px;transform-origin:0 50%;top:682px;font-size:17.75px;color:#1F2538;font-weight:400;transform:scaleX(1.2033);">0</span>
<span class="t" id="t58" style="left:1598.00px;transform-origin:0 50%;top:682px;font-size:17.75px;color:#1F2538;font-weight:400;transform:scaleX(0.8275);">1</span>
<span class="t" id="t59" style="left:1442.20px;transform-origin:0 50%;top:730px;font-size:20.25px;color:#1F2538;font-weight:700;transform:scaleX(1.0020);">Clone</span>
<span class="t" id="t60" style="left:1442.80px;transform-origin:0 50%;top:802px;font-size:20.25px;color:#1F2538;font-weight:700;transform:scaleX(0.9836);">Bidding Stats</span>
<span class="t" id="t61" style="left:1442.80px;transform-origin:0 50%;top:875px;font-size:20.25px;color:#1F2538;font-weight:700;transform:scaleX(0.9854);">Pause Settings</span>
<span class="t" id="t62" style="left:1442.80px;transform-origin:0 50%;top:946px;font-size:20.25px;color:#EBBBBB;font-weight:700;transform:scaleX(0.9822);">Archive</span>
</body></html>
